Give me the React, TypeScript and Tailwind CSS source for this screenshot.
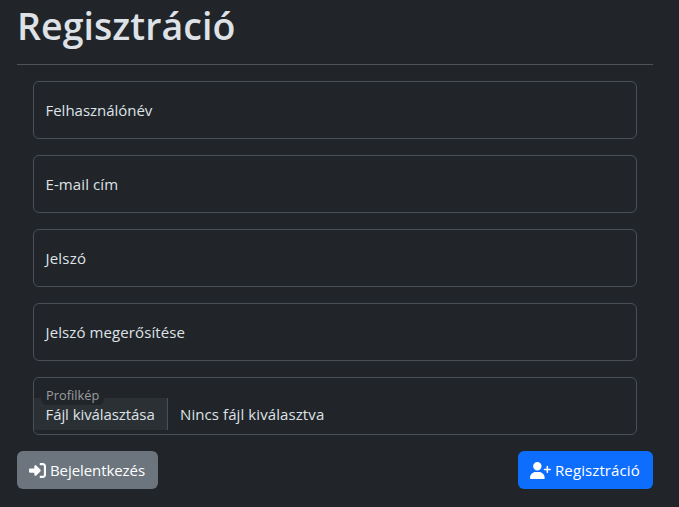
import { FaRightToBracket, FaUserPlus } from "react-icons/fa6";

const fields = [
  { label: "Felhasználónév", tracking: "tracking-[-0.02px]" },
  { label: "E-mail cím", tracking: "tracking-[0.1px]" },
  { label: "Jelszó", tracking: "tracking-[0.2px]" },
  { label: "Jelszó megerősítése", tracking: "tracking-[0.1px]" },
];

export default function App() {
  return (
    <main className="h-[507px] w-[679px] overflow-hidden bg-[#212529] pl-[17px] pr-[26px] font-['Open_Sans','Noto_Sans',sans-serif] text-[15px] leading-6 text-[#dee2e6]">
      <h1 className="flex h-16 items-start pt-[2px] text-[37.5px] font-semibold leading-[48px]">
        <span className="tracking-[0.05px]">Regisztráció</span>
      </h1>
      <hr className="border-[#4f5357]" />
      <form className="flex flex-col gap-4 px-4 pt-4">
        {fields.map((f) => (
          <label key={f.label} className="flex h-[58px] items-center rounded-md border border-[#495057] pl-[11.5px]">
            <span className={f.tracking}>{f.label}</span>
          </label>
        ))}
        <div className="relative flex h-[58px] items-end overflow-hidden rounded-md border border-[#495057] pb-1">
          <span className="flex h-8 w-[134px] items-center border-r border-[#495057] bg-[#2b3035] pl-[11.5px]">
            <span className="tracking-[-0.08px]">Fájl kiválasztása</span>
          </span>
          <span className="flex h-8 items-center pl-3">
            <span className="tracking-[0.09px]">Nincs fájl kiválasztva</span>
          </span>
          <span className="absolute left-[7px] top-[7px] h-5 w-[63px] rounded-md bg-[#212529] pl-[5px] text-[12.75px] leading-5 tracking-[0.05px] text-[#9a9da0]">
            Profilkép
          </span>
        </div>
      </form>
      <div className="mt-4 flex justify-between text-white">
        <button className="flex h-[38px] w-[141px] items-center gap-1 rounded-md bg-[#6c757d] pl-3">
          <FaRightToBracket className="size-[17px] shrink-0" />
          <span className="tracking-[-0.08px]">Bejelentkezés</span>
        </button>
        <button className="flex h-[38px] w-[135px] items-center gap-1 rounded-md bg-[#0d6efd] pl-3">
          <FaUserPlus className="h-[17px] w-[21px] shrink-0" />
          <span className="tracking-[0.1px]">Regisztráció</span>
        </button>
      </div>
    </main>
  );
}
